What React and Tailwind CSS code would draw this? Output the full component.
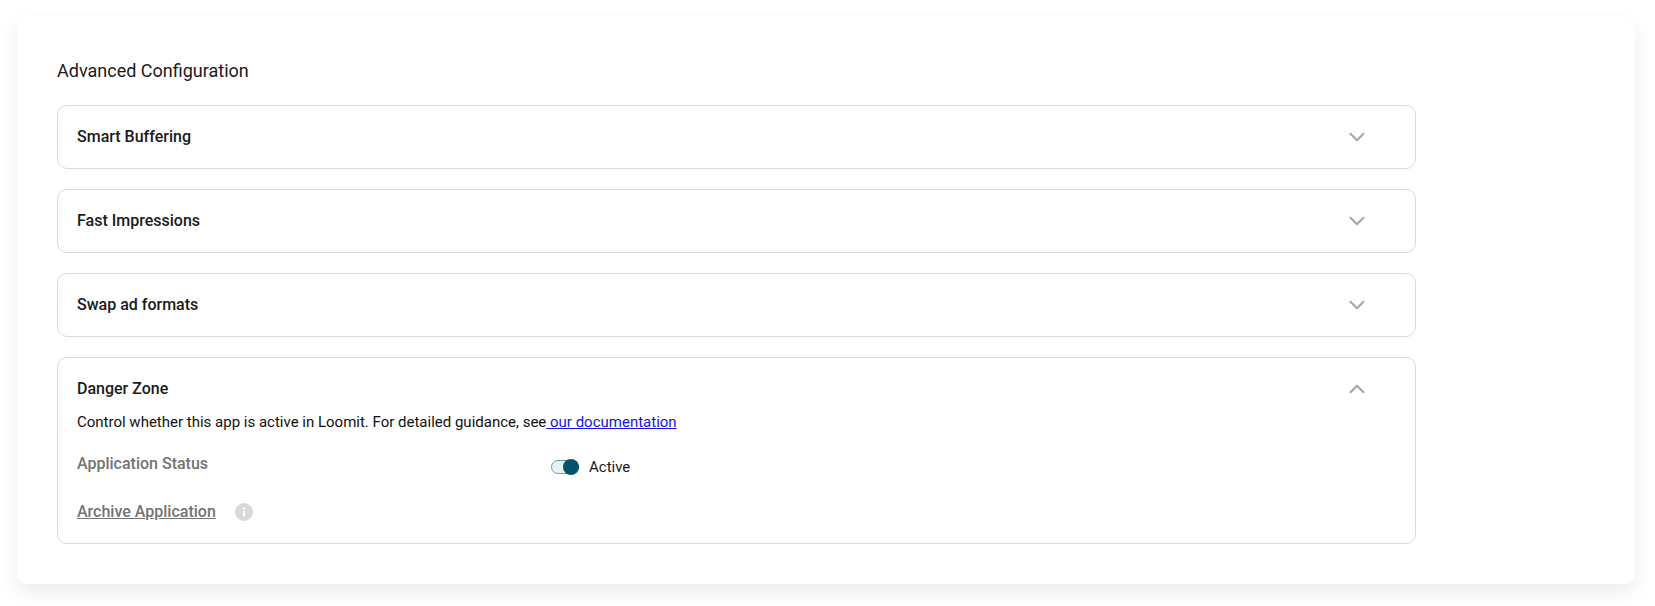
import { ChevronDown, ChevronUp } from 'lucide-react';

function AccordionHeader({ title, open }) {
  const Icon = open ? ChevronUp : ChevronDown;
  return (
    <div className="flex items-center justify-between h-[62px] pl-[19px] pr-[45px]">
      <span className="text-[16px] font-medium text-[#1a1a1a]">{title}</span>
      <Icon size={26} strokeWidth={1.9} className="text-[#a6a6a6]" />
    </div>
  );
}

export default function App() {
  return (
    <div className="w-[1655px] h-[606px] bg-white overflow-hidden pt-[17px] pl-[17px] font-['Roboto',sans-serif]">
      <div className="w-[1618px] h-[567px] rounded-[10px] bg-white pt-[40px] pl-[40px] shadow-[0_8px_20px_rgba(0,0,0,0.08)]">
        <h2 className="h-[28px] leading-[28px] text-[18px] font-[450] text-[#1a1a1a]">Advanced Configuration</h2>
        <div className="mt-[20px] w-[1359px] flex flex-col gap-[20px]">
          <div className="border border-[#d9d9d9] rounded-[10px]">
            <AccordionHeader title="Smart Buffering" />
          </div>
          <div className="border border-[#d9d9d9] rounded-[10px]">
            <AccordionHeader title="Fast Impressions" />
          </div>
          <div className="border border-[#d9d9d9] rounded-[10px]">
            <AccordionHeader title="Swap ad formats" />
          </div>
          <div className="border border-[#d9d9d9] rounded-[10px] h-[187px]">
            <AccordionHeader title="Danger Zone" open />
            <div className="pl-[19px] -mt-[8px]">
              <p className="text-[15px] leading-[20px] text-[#111]">
                Control whether this app is active in Loomit. For detailed guidance, see
                <a href="#" className="text-[#1414e6] underline"> our documentation</a>
              </p>
              <div className="mt-[22px] flex items-start">
                <span className="w-[474px] text-[16px] leading-[20px] font-medium text-[#737373]">Application Status</span>
                <div className="flex items-center gap-[10px] mt-[3px]">
                  <div className="relative w-[28px] h-[14px] rounded-full bg-[#e8f2f5] border border-[#6f9dab]">
                    <span className="absolute -right-px -top-[2px] w-[16px] h-[16px] rounded-full bg-[#04536a]" />
                  </div>
                  <span className="text-[15px] leading-[20px] text-[#1a1a1a]">Active</span>
                </div>
              </div>
              <div className="mt-[25px] flex items-center gap-[19px]">
                <span className="text-[16px] leading-[20px] font-medium text-[#737373] underline">Archive Application</span>
                <svg width="18" height="18" viewBox="0 0 18 18">
                  <circle cx="9" cy="9" r="9" fill="#d9d9d9" />
                  <circle cx="9" cy="5.6" r="1.2" fill="#fff" />
                  <rect x="8" y="8" width="2" height="5.5" fill="#fff" />
                </svg>
              </div>
            </div>
          </div>
        </div>
      </div>
    </div>
  );
}
